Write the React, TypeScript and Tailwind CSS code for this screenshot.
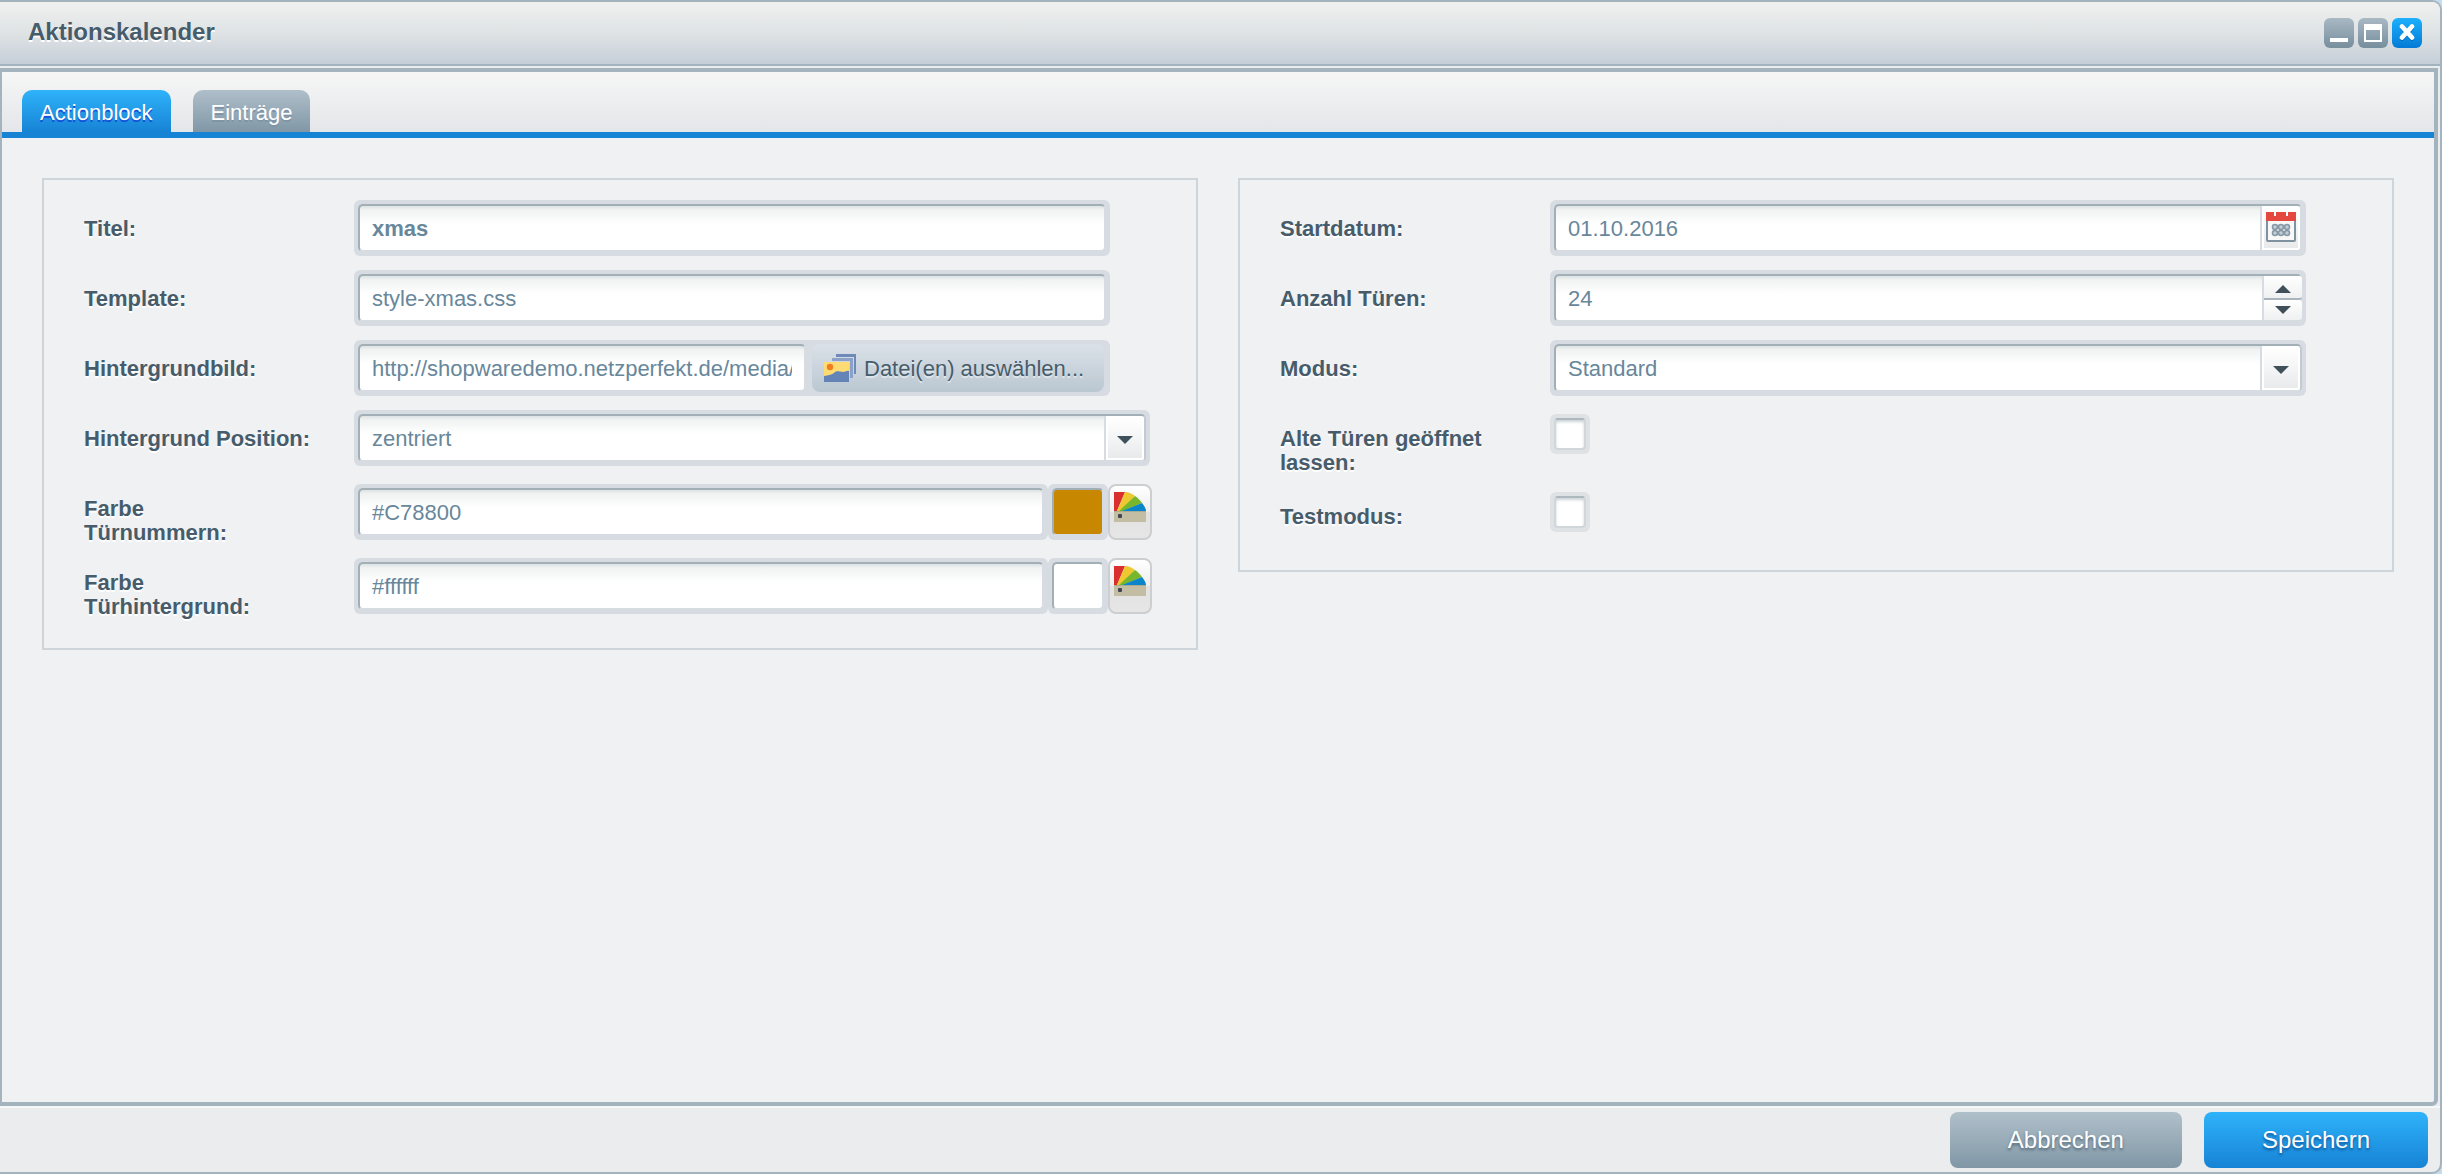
import { useState } from 'react';
import type { ReactNode } from 'react';

interface RowProps {
  label: string;
  htmlFor: string;
  className?: string;
  labelPadding?: string;
  children: ReactNode;
}

function Row({ label, htmlFor, className = '', labelPadding = 'pr-10', children }: RowProps) {
  return (
    <div className={`flex items-start ${className}`}>
      <label
        htmlFor={htmlFor}
        className={`w-[270px] shrink-0 pt-[17px] text-[22px] leading-6 font-bold text-[#475c6a] [text-shadow:0_2px_0_#fff] ${labelPadding}`}
      >
        {label}
      </label>
      {children}
    </div>
  );
}

// Grey ring around every form control
const ring = 'h-14 min-w-0 flex-1 rounded-md bg-[#d7dce2] p-1';

const controlBase =
  'block h-12 w-full min-w-0 rounded-[5px] border-2 border-t-[#a3afb7] border-l-[#a3afb7] border-b-[#d7dce2] bg-[linear-gradient(#dde2e4_0,#f0f3f2_4px,#ffffff_18px)] px-3 text-[22px] text-[#68879b] outline-none';
const inputBase = `${controlBase} border-r-[#d7dce2] pt-0.5`;

function TextInput({ id, value, bold = false }: { id: string; value: string; bold?: boolean }) {
  const [text, setText] = useState(value);
  return (
    <input
      id={id}
      type="text"
      value={text}
      onChange={e => setText(e.target.value)}
      className={`${inputBase} ${bold ? 'font-bold' : ''}`}
    />
  );
}

function ArrowDown() {
  return (
    <svg width="16" height="8" viewBox="0 0 16 8" aria-hidden="true">
      <path d="M0 0h16L8 8z" fill="#3f505b" />
    </svg>
  );
}

function ArrowUp() {
  return (
    <svg width="16" height="8" viewBox="0 0 16 8" aria-hidden="true">
      <path d="M0 8h16L8 0z" fill="#3f505b" />
    </svg>
  );
}

const trigger =
  'absolute top-1.5 right-1.5 flex h-11 w-10 items-center justify-center rounded-r-[3px] border-l-2 border-l-[#d7dce2] bg-white p-0.5';
const triggerFace = 'flex h-full w-full items-center justify-center bg-linear-to-b from-white to-[#e9eaec]';

function SelectField({ id, options }: { id: string; options: string[] }) {
  return (
    <div className={`${ring} relative`}>
      <select id={id} className={`${controlBase} appearance-none border-r-[#c3cad1]`}>
        {options.map(option => (
          <option key={option}>{option}</option>
        ))}
      </select>
      <span className={`${trigger} pointer-events-none`}>
        <span className={`${triggerFace} pt-1`}>
          <ArrowDown />
        </span>
      </span>
    </div>
  );
}

function CalendarIcon() {
  return (
    <svg width="30" height="30" viewBox="0 0 30 30" className="shrink-0" aria-hidden="true">
      <rect x="1" y="6" width="28" height="23" rx="1" fill="#f8f8f8" stroke="#7f929f" strokeWidth="2" />
      <path d="M0 0h8v4h2V0h10v4h2V0h8v9H0z" fill="#e5483f" />
      <g fill="#c3cdd4" stroke="#8799a6" strokeWidth="1.6">
        <circle cx="9" cy="15" r="2.5" />
        <circle cx="15" cy="15" r="2.5" />
        <circle cx="21" cy="15" r="2.5" />
        <circle cx="9" cy="21" r="2.5" />
        <circle cx="15" cy="21" r="2.5" />
        <circle cx="21" cy="21" r="2.5" />
      </g>
    </svg>
  );
}

function PicturesIcon() {
  return (
    <svg width="32" height="28" viewBox="0 0 32 28" aria-hidden="true">
      <path d="M12 0h20v20h-2V3H12z" fill="#6f89b8" />
      <path d="M8 4h21v20h-3V7H8z" fill="#8ba1c8" />
      <path d="M0 8h25v20H0z" fill="#ffdc73" />
      <path d="M0 22c4-1 7-1 10-3 3-3 6-1 9-1 2 0 4-2 6-1v11H0z" fill="#6484b8" />
      <circle cx="6" cy="13" r="3.2" fill="#f07d22" />
    </svg>
  );
}

function PaletteIcon() {
  return (
    <svg width="32" height="32" viewBox="0 0 32 32" aria-hidden="true">
      <path d="M0 21V2h11L3 21z" fill="#d9302f" />
      <path d="M3 21L11 2c4 0 7 2 10 4L7 21z" fill="#edc830" />
      <path d="M5 21L21 6c3 2 5 4 7 7L9 21z" fill="#78b62c" />
      <path d="M8 21l20-8c2 3 4 5 4 8z" fill="#0a85ca" />
      <path d="M0 21h32v11H0z" fill="#c2bda3" />
      <path d="M0 21h32v1H0z" fill="#a9aa94" />
      <rect x="4" y="24" width="4" height="4" rx="1" fill="#434754" />
    </svg>
  );
}

function ColorField({ id, color, name }: { id: string; color: string; name: string }) {
  return (
    <div className="mt-1 flex min-w-0 flex-1">
      <div className={ring}>
        <TextInput id={id} value={color} />
      </div>
      <div className="h-14 w-15 shrink-0 rounded-md bg-[#d7dce2] p-1">
        <div
          className="h-12 rounded-[5px] border-2 border-t-[#a3afb7] border-l-[#a3afb7] border-r-[#d7dce2] border-b-[#d7dce2]"
          style={{ backgroundColor: color }}
        />
      </div>
      <button
        type="button"
        aria-label={`${name} auswählen`}
        className="flex h-14 w-11 shrink-0 justify-center rounded-lg border-2 border-[#cdcecf] bg-[linear-gradient(#ffffff_0,#ededee_50%,#e2e2e3_50%,#e6e6e6_100%)] pt-1"
      >
        <PaletteIcon />
      </button>
    </div>
  );
}

function Checkbox({ id }: { id: string }) {
  return (
    <div className="mt-1 mb-1 rounded-md bg-[#dfe2e5] p-1">
      <input
        id={id}
        type="checkbox"
        className="block size-8 appearance-none rounded-[4px] border-2 border-[#d0d6da] border-t-[#aeb8bf] bg-white shadow-[inset_0_2px_3px_#ccd3d7] checked:bg-[#189eff]"
      />
    </div>
  );
}

function TitleBar() {
  const button = 'flex size-[30px] items-center justify-center rounded-md';
  const grey = 'bg-linear-to-b from-[#a9b9c4] to-[#778e9d]';
  return (
    <header className="flex h-16 shrink-0 items-center justify-between border-b-2 border-[#a4b4bf] bg-linear-to-b from-[#f0f0ef] via-[#dfe3e5] to-[#c5ced8] pr-[18px] pl-7">
      <h1 className="pb-0.5 text-2xl leading-7 font-bold text-[#475c6a] [text-shadow:0_2px_0_#fff]">Aktionskalender</h1>
      <div className="flex gap-1">
        <button type="button" aria-label="Minimieren" className={`${button} ${grey}`}>
          <svg width="30" height="30" viewBox="0 0 30 30">
            <rect x="6" y="20" width="18" height="4" fill="#fff" />
          </svg>
        </button>
        <button type="button" aria-label="Maximieren" className={`${button} ${grey}`}>
          <svg width="30" height="30" viewBox="0 0 30 30">
            <path d="M6 6h18v18H6zM8 12v10h14V12z" fill="#fff" fillRule="evenodd" />
          </svg>
        </button>
        <button type="button" aria-label="Schließen" className={`${button} bg-linear-to-b from-[#1cb0fd] to-[#057bd6]`}>
          <svg width="30" height="30" viewBox="0 0 30 30">
            <path d="M10 10l10 11M20 10L10 21" stroke="#0569b5" strokeWidth="4" strokeLinecap="round" />
            <path d="M10 8.5l10 11M20 8.5l-10 11" stroke="#fff" strokeWidth="4.8" strokeLinecap="round" />
          </svg>
        </button>
      </div>
    </header>
  );
}

const tabs = ['Actionblock', 'Einträge'];

export default function App() {
  const [activeTab, setActiveTab] = useState('Actionblock');
  const [doors, setDoors] = useState(24);

  const fieldset = 'flex flex-col gap-3.5 border-2 border-[#cdd5db] pt-5 pb-[34px] pl-10 pr-11';

  return (
    <div className="flex min-h-screen bg-[#c4dcee] font-['Liberation_Sans',Arial,sans-serif]">
      <div className="flex min-w-0 flex-1 flex-col overflow-hidden rounded-r-[10px] border-y-2 border-r-2 border-[#a4b4bf] bg-[#ebecee]">
        <TitleBar />

        <main className="mt-0.5 mr-0.5 flex flex-1 flex-col rounded-br-md border-4 border-l-2 border-[#a4b4bf] bg-[#f0f1f3]">
          <div
            role="tablist"
            className="flex h-[66px] items-end gap-[22px] border-b-6 border-[#1783d5] bg-linear-to-b from-[#f6f6f6] to-[#e4e6e9] pl-5"
          >
            {tabs.map(tab => (
              <button
                key={tab}
                type="button"
                role="tab"
                aria-selected={tab === activeTab}
                onClick={() => setActiveTab(tab)}
                className={`h-[42px] rounded-t-[10px] px-[18px] pt-0.5 text-[22px] text-white ${
                  tab === activeTab
                    ? 'bg-linear-to-b from-[#2fb3fa] to-[#1783d5] [text-shadow:0_2px_0_#1450d8]'
                    : 'bg-linear-to-b from-[#afbfca] to-[#8197a6] [text-shadow:0_2px_0_#7e93a6]'
                }`}
              >
                {tab}
              </button>
            ))}
          </div>

          <form id="action-form" className="grid grid-cols-2 items-start gap-10 p-10" onSubmit={e => e.preventDefault()}>
            <fieldset className={fieldset}>
              <Row label="Titel:" htmlFor="title">
                <div className={`${ring} mr-[42px]`}>
                  <TextInput id="title" value="xmas" bold />
                </div>
              </Row>
              <Row label="Template:" htmlFor="template">
                <div className={`${ring} mr-[42px]`}>
                  <TextInput id="template" value="style-xmas.css" />
                </div>
              </Row>
              <Row label="Hintergrundbild:" htmlFor="background">
                <div className={`${ring} mr-[42px] flex gap-1.5 pr-1.5`}>
                  <TextInput id="background" value="http://shopwaredemo.netzperfekt.de/media/" />
                  <button
                    type="button"
                    className="flex h-12 w-[292px] shrink-0 items-center gap-2 rounded-lg bg-linear-to-b from-[#dbe1e8] to-[#bac7d1] pl-3 text-[22px] whitespace-nowrap text-[#475c6a] [text-shadow:0_2px_0_#dfe6eb]"
                  >
                    <PicturesIcon />
                    Datei(en) auswählen...
                  </button>
                </div>
              </Row>
              <Row label="Hintergrund Position:" htmlFor="position" className="mr-0.5">
                <SelectField id="position" options={['zentriert', 'links', 'rechts']} />
              </Row>
              <Row label="Farbe Türnummern:" htmlFor="number-color" className="h-15" labelPadding="pr-20">
                <ColorField id="number-color" color="#C78800" name="Farbe Türnummern" />
              </Row>
              <Row label="Farbe Türhintergrund:" htmlFor="door-color" className="h-15" labelPadding="pr-20">
                <ColorField id="door-color" color="#ffffff" name="Farbe Türhintergrund" />
              </Row>
            </fieldset>

            <fieldset className={fieldset}>
              <Row label="Startdatum:" htmlFor="start-date" className="mr-[42px]">
                <div className={`${ring} relative`}>
                  <TextInput id="start-date" value="01.10.2016" />
                  <button type="button" aria-label="Datum wählen" className={trigger}>
                    <span className={`${triggerFace} pb-0.5`}>
                      <CalendarIcon />
                    </span>
                  </button>
                </div>
              </Row>
              <Row label="Anzahl Türen:" htmlFor="doors" className="mr-[42px]">
                <div className={`${ring} relative`}>
                  <input
                    id="doors"
                    type="text"
                    inputMode="numeric"
                    value={doors}
                    onChange={e => setDoors(Number(e.target.value) || 0)}
                    className={inputBase}
                  />
                  <div className="absolute top-1.5 right-1 flex h-11 w-10 flex-col border-l-2 border-[#d7dce2]">
                    <button
                      type="button"
                      aria-label="Mehr"
                      onClick={() => setDoors(doors + 1)}
                      className="flex h-6 items-center justify-center rounded-r-[3px] border-b-2 border-[#a9b4bd] bg-linear-to-b from-white to-[#eff0f1] pt-1"
                    >
                      <ArrowUp />
                    </button>
                    <button
                      type="button"
                      aria-label="Weniger"
                      onClick={() => setDoors(doors - 1)}
                      className="flex h-5 items-center justify-center rounded-r-[3px] bg-linear-to-b from-white to-[#eff0f1]"
                    >
                      <ArrowDown />
                    </button>
                  </div>
                </div>
              </Row>
              <Row label="Modus:" htmlFor="mode" className="mr-[42px]">
                <SelectField id="mode" options={['Standard']} />
              </Row>
              <Row label="Alte Türen geöffnet lassen:" htmlFor="keep-open" className="h-16">
                <Checkbox id="keep-open" />
              </Row>
              <Row label="Testmodus:" htmlFor="test-mode">
                <Checkbox id="test-mode" />
              </Row>
            </fieldset>
          </form>
        </main>

        <footer className="flex shrink-0 justify-end gap-[22px] border-t-2 border-[#f6f7f8] pt-1 pr-3 pb-1">
          <button
            type="button"
            className="h-14 rounded-lg bg-linear-to-b from-[#b0c0ca] to-[#8197a6] px-[58px] text-2xl text-white [text-shadow:0_2px_3px_#4f6575]"
          >
            Abbrechen
          </button>
          <button
            type="submit"
            form="action-form"
            className="h-14 rounded-lg bg-linear-to-b from-[#2fb3fa] to-[#1783d5] px-[58px] text-2xl text-white [text-shadow:0_2px_3px_#0d4f91]"
          >
            Speichern
          </button>
        </footer>
      </div>
    </div>
  );
}
